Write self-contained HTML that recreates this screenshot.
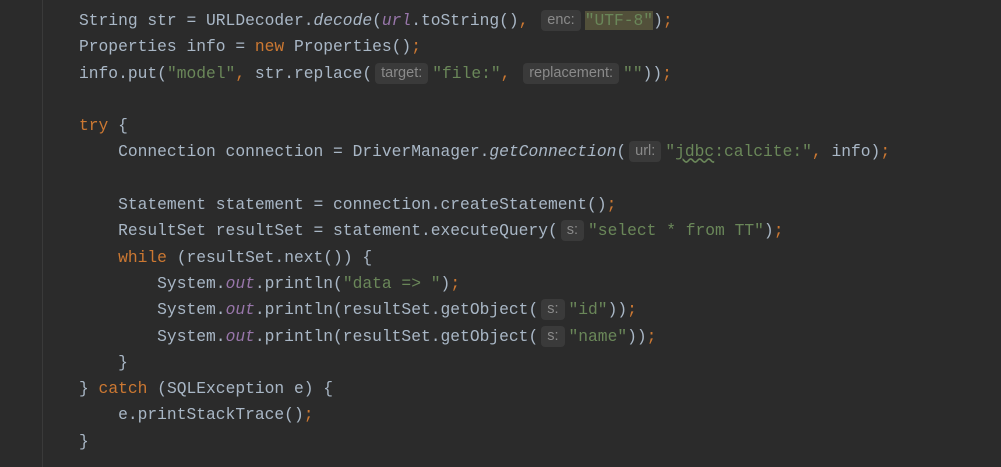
<!DOCTYPE html>
<html><head><meta charset="utf-8"><style>
html,body{margin:0;padding:0;}
body{width:1001px;height:467px;background:#2b2b2b;overflow:hidden;position:relative;}
.gut{position:absolute;left:0;top:0;width:42px;height:467px;background:#2b2b2b;border-right:1px solid #3a3a3a;}
.code{position:absolute;left:79px;top:8px;font-family:"Liberation Mono",monospace;font-size:16.3px;line-height:26.3px;color:#a9b7c6;white-space:pre;}
.l{height:26.3px;}
.k{color:#cc7832}.s{color:#6a8759}.i{font-style:italic}.p{color:#9876aa;font-style:italic}
.h{display:inline-block;font-family:"Liberation Sans",sans-serif;font-size:14.5px;line-height:21px;height:21px;padding:0 6px;margin:0 4px 0 3px;background:#3a3a3a;color:#8a8a8a;border-radius:4px;vertical-align:1px;}
.hl{background:#52503a}
.u{text-decoration:underline wavy #6a8759;}
</style></head><body>
<div class="gut"></div>
<div class="code"><div class="l">String str = URLDecoder.<span class="i">decode</span>(<span class="p">url</span>.toString()<span class="k">,</span> <span class="h">enc:</span><span class="s hl">"UTF-8"</span>)<span class="k">;</span></div><div class="l">Properties info = <span class="k">new</span> Properties()<span class="k">;</span></div><div class="l">info.put(<span class="s">"model"</span><span class="k">,</span> str.replace(<span class="h">target:</span><span class="s">"file:"</span><span class="k">,</span> <span class="h">replacement:</span><span class="s">""</span>))<span class="k">;</span></div><div class="l"> </div><div class="l"><span class="k">try</span> {</div><div class="l">    Connection connection = DriverManager.<span class="i">getConnection</span>(<span class="h">url:</span><span class="s">"<span class="u">jdbc</span>:calcite:"</span><span class="k">,</span> info)<span class="k">;</span></div><div class="l"> </div><div class="l">    Statement statement = connection.createStatement()<span class="k">;</span></div><div class="l">    ResultSet resultSet = statement.executeQuery(<span class="h">s:</span><span class="s">"select * from TT"</span>)<span class="k">;</span></div><div class="l">    <span class="k">while</span> (resultSet.next()) {</div><div class="l">        System.<span class="p">out</span>.println(<span class="s">"data =&gt; "</span>)<span class="k">;</span></div><div class="l">        System.<span class="p">out</span>.println(resultSet.getObject(<span class="h">s:</span><span class="s">"id"</span>))<span class="k">;</span></div><div class="l">        System.<span class="p">out</span>.println(resultSet.getObject(<span class="h">s:</span><span class="s">"name"</span>))<span class="k">;</span></div><div class="l">    }</div><div class="l">} <span class="k">catch</span> (SQLException e) {</div><div class="l">    e.printStackTrace()<span class="k">;</span></div><div class="l">}</div></div>
</body></html>
